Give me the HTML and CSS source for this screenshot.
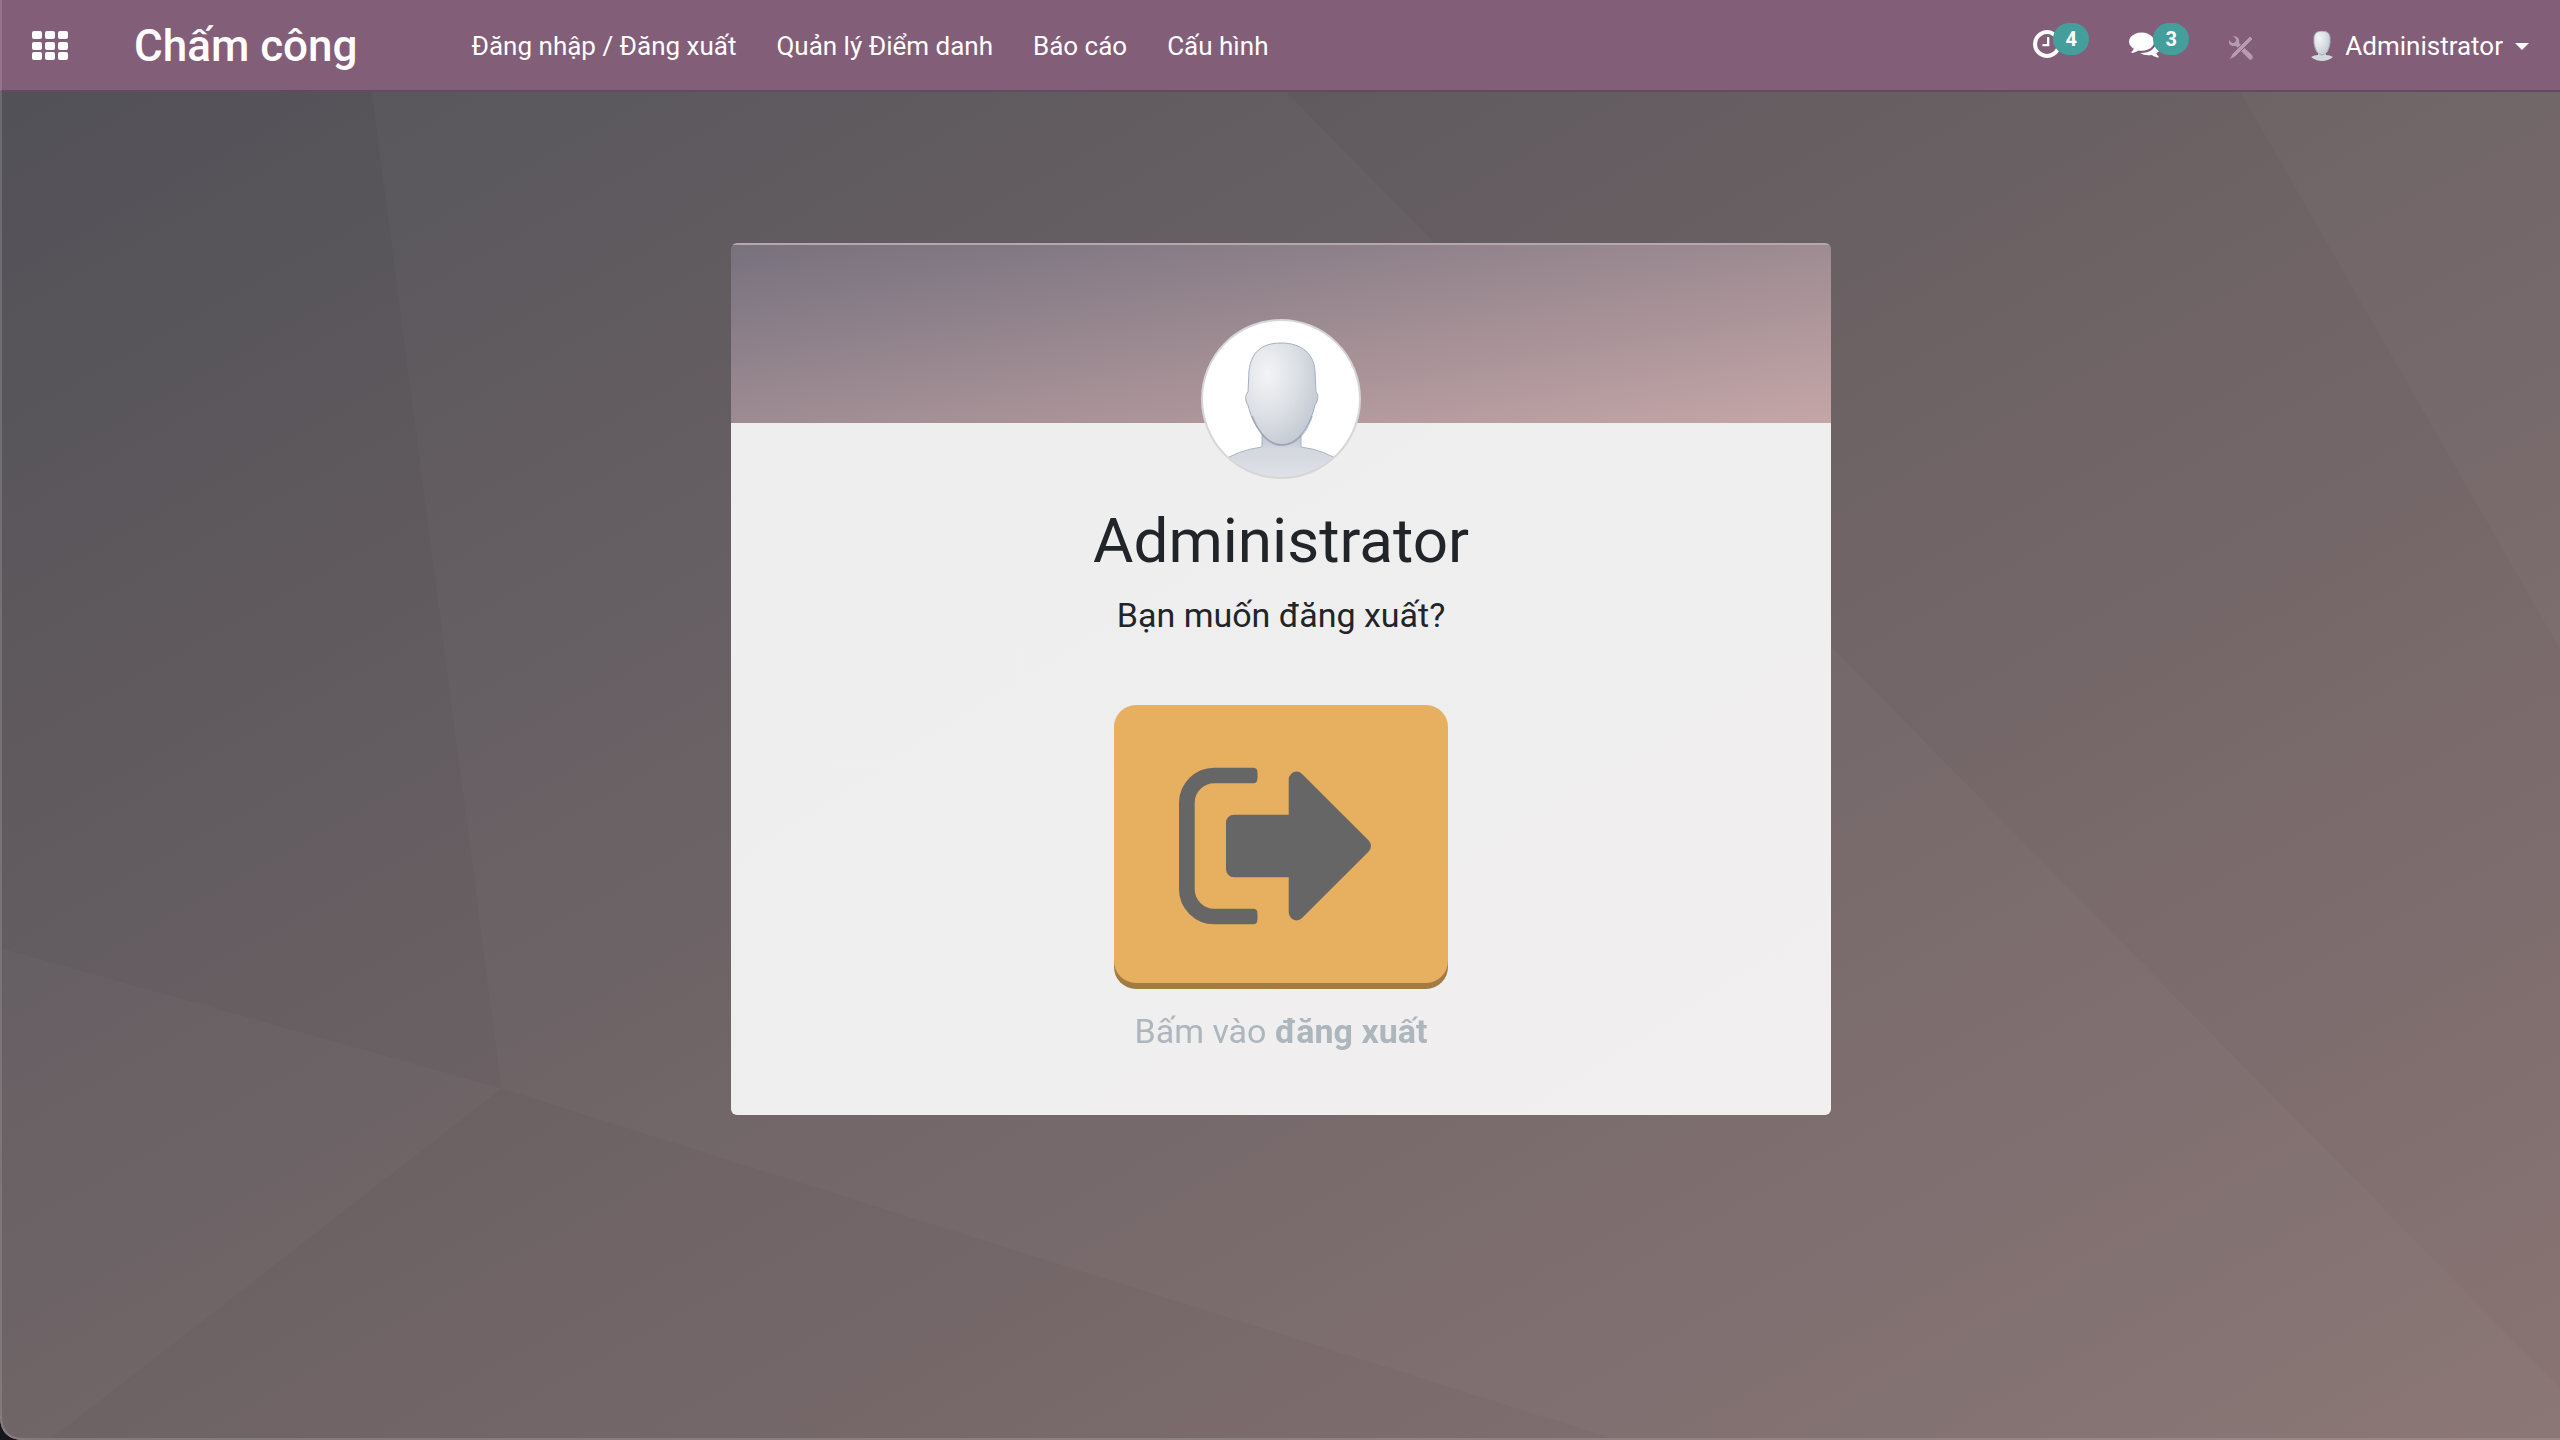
FILE: index.html
```html
<!DOCTYPE html>
<html lang="vi">
<head>
    <meta charset="UTF-8">
    <meta name="viewport" content="width=device-width, initial-scale=1.0">
    <title>Chấm công</title>
    <link rel="stylesheet" href="styles.css">
</head>
<body>

<svg class="backdrop" viewBox="0 0 2560 1440" preserveAspectRatio="none" aria-hidden="true">
    <polygon class="facet" points="370,92 1285,92 2560,1390 2560,1440 1610,1440 500,1090"/>
    <polygon class="facet" points="0,950 500,1090 50,1440 0,1440"/>
    <polygon class="facet" points="2240,92 2560,92 2560,650"/>
</svg>
<svg class="corner" viewBox="0 0 24 24" aria-hidden="true">
    <path d="M0 0Q0 24 24 24H0z" fill="#15161a"/>
    <path d="M1 0Q1 23 24 23" fill="none" stroke="#877c82" stroke-width="2"/>
</svg>

<header class="navbar">
    <button class="apps" aria-label="Ứng dụng">
        <svg viewBox="0 0 36 30">
            <g fill="#fff">
                <rect x="0" y="0" width="10" height="8" rx="2"/><rect x="13" y="0" width="10" height="8" rx="2"/><rect x="26" y="0" width="10" height="8" rx="2"/>
                <rect x="0" y="11" width="10" height="8" rx="2"/><rect x="13" y="11" width="10" height="8" rx="2"/><rect x="26" y="11" width="10" height="8" rx="2"/>
                <rect x="0" y="21" width="10" height="8" rx="2"/><rect x="13" y="21" width="10" height="8" rx="2"/><rect x="26" y="21" width="10" height="8" rx="2"/>
            </g>
        </svg>
    </button>
    <a class="brand" href="#">Chấm công</a>
    <nav class="menu">
        <a href="#">Đăng nhập / Đăng xuất</a>
        <a href="#">Quản lý Điểm danh</a>
        <a href="#">Báo cáo</a>
        <a href="#">Cấu hình</a>
    </nav>
    <div class="systray">
        <button class="tray-item activity" aria-label="Hoạt động">
            <svg class="icon-clock" viewBox="0 128 1536 1536"><path fill="#fff" d="M896 544v448q0 14-9 23t-23 9h-320q-14 0-23-9t-9-23v-64q0-14 9-23t23-9h224v-352q0-14 9-23t23-9h64q14 0 23 9t9 23zm416 352q0-148-73-273t-198-198-273-73-273 73-198 198-73 273 73 273 198 198 273 73 273-73 198-198 73-273zm224 0q0 209-103 385.5t-279.5 279.5-385.5 103-385.5-103-279.5-279.5-103-385.5 103-385.5 279.5-279.5 385.5-103 385.5 103 279.5 279.5 103 385.5z"/></svg>
            <span class="badge">4</span>
        </button>
        <button class="tray-item messages" aria-label="Tin nhắn">
            <svg class="icon-chat" viewBox="0 256 1792 1408"><path fill="#fff" d="M1408 768q0 139-94 257t-256.5 186.5-353.5 68.5q-86 0-176-16-124 88-278 128-36 9-86 16h-3q-11 0-20.5-8t-11.5-21q-1-3-1-6.5t.5-6.5 2-6l2.5-5t3.5-5.5 4-5 4.5-5 4-4.5q5-6 23-25t26-29.5 22.5-29 25-38.5 20.5-44q-124-72-195-177t-71-224q0-139 94-257t256.5-186.5 353.5-68.5 353.5 68.5 256.5 186.5 94 257zm384 256q0 120-71 224.5t-195 176.5q10 24 20.5 44t25 38.5 22.5 29 26 29.5 23 25q1 1 4 4.5t4.5 5 4 5 3.5 5.5l2.5 5t2 6 .5 6.5-1 6.5q-3 14-13 22t-22 7q-50-7-86-16-154-40-278-128-90 16-176 16-271 0-472-132 58 4 88 4 161 0 309-45t264-129q125-92 192-212t67-254q0-77-23-152 129 71 204 178t75 230z"/></svg>
            <span class="badge">3</span>
        </button>
        <button class="tray-item debug" aria-label="Công cụ nhà phát triển">
            <svg class="icon-tools" viewBox="0 0 24 24">
                <path d="M4 0L7 3V5L5 7H3L0 4Q-1 8 3 10Q5 10 7 10L19 22Q21 25 23 23Q25 21 22 18L10 7Q11 3 8 1Q6 0 4 0z" fill="#b69bb1"/>
                <path d="M21 0L24 3L6 21L0 24L3 18z" fill="#b69bb1" stroke="#835e79"/>
            </svg>
        </button>
        <button class="user">
            <svg class="user-pic" viewBox="0 0 22 30">
                <path d="M0 26Q3 24 7 24V20H15V24Q19 24 22 26Q17 30 11 30T0 26z" fill="#d3d8dd"/>
                <path d="M11 0Q18 0 19 6V12Q17 24 11 24T3 12V6Q4 0 11 0z" fill="url(#face)" stroke="#a8b0bd"/>
            </svg>
            Administrator
            <svg class="caret" viewBox="0 0 14 7"><path d="M0 0H14L7 7z" fill="#fff"/></svg>
        </button>
    </div>
</header>

<main class="kiosk">
    <section class="card">
        <div class="card-banner">
            <svg class="avatar" viewBox="0 0 160 160" role="img" aria-label="Administrator">
                <defs>
                    <radialGradient id="face" cx=".3" cy=".3" r=".85">
                        <stop offset="0" stop-color="#f3f4f6"/>
                        <stop offset=".5" stop-color="#dcdfe4"/>
                        <stop offset="1" stop-color="#bdc4cf"/>
                    </radialGradient>
                    <linearGradient id="body" x2="0" y2="1">
                        <stop offset="0" stop-color="#b4bdcb"/>
                        <stop offset=".4" stop-color="#d3d7de"/>
                        <stop offset="1" stop-color="#dfe2e7"/>
                    </linearGradient>
                    <clipPath id="round"><circle cx="80" cy="80" r="79"/></clipPath>
                </defs>
                <circle cx="80" cy="80" r="79" fill="#fff"/>
                <g clip-path="url(#round)">
                    <path d="M18 144Q37 131 61 128V110H100V128Q124 131 142 144V160H18z" fill="url(#body)" stroke="#a9b4c5"/>
                    <path d="M80 24C101 24 113 35 114 52L115 73C118 75 117 83 114 86C110 104 98 126 81 126S51 104 47 86C44 83 44 75 47 73L48 52C50 34 60 24 80 24z" fill="url(#face)" stroke="#a3afc1"/>
                    <path d="M51 97C57 112 66 126 81 126S106 112 111 97" fill="none" stroke="#8794aa" stroke-opacity=".5" stroke-width="2"/>
                </g>
                <circle cx="80" cy="80" r="79" fill="none" stroke="#d6d5d7" stroke-width="2"/>
            </svg>
        </div>
        <div class="card-body">
            <h1>Administrator</h1>
            <h2>Bạn muốn đăng xuất?</h2>
            <button class="sign-out" aria-label="Đăng xuất">
                <svg viewBox="0 256 1568 1280"><path fill="#666" d="M640 1440q0 4 1 20t.5 26.5-3 23.5-10 19.5-20.5 6.5h-320q-119 0-203.5-84.5t-84.5-203.5v-704q0-119 84.5-203.5t203.5-84.5h320q13 0 22.5 9.5t9.5 22.5q0 4 1 20t.5 26.5-3 23.5-10 19.5-20.5 6.5h-320q-66 0-113 47t-47 113v704q0 66 47 113t113 47h312l11.5 1 11.5 3 8 5.5 7 9 2 13.5zm928-544q0 26-19 45l-544 544q-19 19-45 19t-45-19-19-45v-288h-448q-26 0-45-19t-19-45v-384q0-26 19-45t45-19h448v-288q0-26 19-45t45-19 45 19l544 544q19 19 19 45z"/></svg>
            </button>
            <p class="hint">Bấm vào <b>đăng xuất</b></p>
        </div>
    </section>
</main>

</body>
</html>
```
FILE: styles.css
```css
* {
    box-sizing: border-box;
}
body {
    margin: 0;
    min-height: 100vh;
    display: flex;
    flex-direction: column;
    font-family: Roboto, "Noto Sans", sans-serif;
    font-size: 26px;
    color: #212529;
    background: linear-gradient(to bottom right, #505056, #897473);
}
button {
    font: inherit;
    color: inherit;
    border: 0;
    padding: 0;
    background: none;
    cursor: pointer;
}
a {
    color: inherit;
    text-decoration: none;
}
svg {
    display: block;
}

/* Background facets, kept behind everything */
.backdrop {
    position: fixed;
    inset: 0;
    width: 100%;
    height: 100%;
    z-index: -1;
    border: solid rgba(255, 255, 255, 0.15);
    border-width: 0 0 2px 2px;
}
.facet {
    fill: rgba(255, 255, 255, 0.025);
}
.corner {
    position: fixed;
    left: 0;
    bottom: 0;
    width: 24px;
    height: 24px;
}

/* Top bar */
.navbar {
    display: flex;
    align-items: center;
    height: 92px;
    padding: 2px 31px 0 30px;
    color: #fff;
    background: #835e79;
    border-bottom: 2px solid #644a60;
    border-left: 2px solid #93748b;
}
.apps svg {
    width: 36px;
    height: 30px;
}
.brand {
    margin: 0 94px 0 66px;
    font-size: 44px;
    font-weight: 500;
}
.menu {
    display: flex;
    gap: 40px;
    margin-left: 20px;
}
.systray {
    display: flex;
    align-items: center;
    margin-left: auto;
}
.tray-item {
    display: flex;
    align-items: center;
    margin-right: 40px;
}
.icon-clock {
    width: 28px;
    height: 28px;
    margin-bottom: 4px;
}
.icon-chat {
    width: 32px;
    height: 26px;
    margin-bottom: 2px;
}
.badge {
    margin: -14px 0 0 -8px;
    min-width: 36px;
    height: 32px;
    border-radius: 16px;
    line-height: 32px;
    font-size: 20px;
    font-weight: 700;
    background: #449e9b;
}
.debug {
    margin-right: 58px;
}
.icon-tools {
    width: 24px;
    height: 24px;
    margin-top: 4px;
}
.user {
    display: flex;
    align-items: center;
    gap: 12px;
}
.user-pic {
    width: 22px;
    height: 30px;
}
.caret {
    width: 14px;
    height: 7px;
}

/* Check in / check out card */
.kiosk {
    flex: 1;
    padding: 151px 20px 40px 22px;
}
.card {
    max-width: 1100px;
    margin: 0 auto;
    border-radius: 6px;
    overflow: hidden;
    text-align: center;
}
.card-banner {
    display: flex;
    justify-content: center;
    height: 180px;
    padding-top: 74px;
    background: linear-gradient(to bottom right, #77717e, #c5a6a7);
    border-top: 2px solid #b5a7ac;
}
.avatar {
    position: relative;
    flex: none;
    width: 160px;
    height: 160px;
}
.card-body {
    padding: 78px 32px 64px;
    background: linear-gradient(to bottom right, #eeeeee, #f1eff0);
}
h1 {
    margin: 0 0 14px;
    font-size: 62px;
    font-weight: 400;
    line-height: 80px;
}
h2 {
    margin: 0 0 70px;
    font-size: 34px;
    font-weight: 400;
    line-height: 40px;
}
.sign-out {
    display: inline-block;
    padding: 62px 77px 58px 65px;
    border-radius: 22px;
    background: #e7af60;
    box-shadow: 0 6px 0 #a27b43;
}
.sign-out svg {
    width: 192px;
    height: 158px;
}
.hint {
    margin: 28px 0 0;
    font-size: 34px;
    line-height: 40px;
    color: #adb5bd;
}
```
